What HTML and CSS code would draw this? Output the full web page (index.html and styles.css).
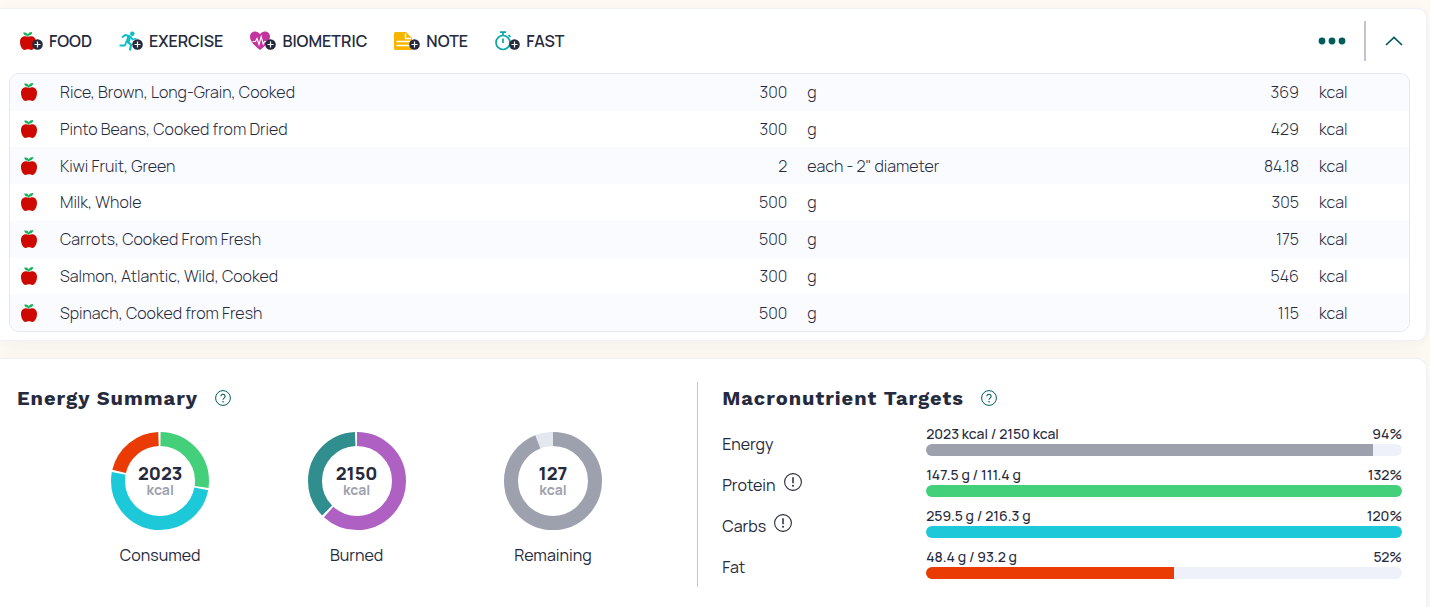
FILE: index.html
```html
<!DOCTYPE html>
<html lang="en">
<head>
    <meta charset="UTF-8">
    <meta name="viewport" content="width=device-width, initial-scale=1.0">
    <title>Food Diary</title>
    <link rel="stylesheet" href="styles.css">
</head>
<body>
    <svg width="0" height="0" class="sprites" aria-hidden="true">
        <symbol id="apple" viewBox="0 0 18 20">
            <path fill="#ce0a00" d="M9 6C6.500 4.600 1.200 4.700 1 10.800c-.1 3.800 2 8.100 4.600 8.200 1.400 0 2-.7 3.400-.7s2 .7 3.400.7c2.600-.1 4.700-4.400 4.600-8.200C16.800 4.700 11.500 4.600 9 6z"/>
            <path fill="#19b25b" d="M8.200 5.800C8 5 7.500 4.700 7 4.600 5.300 4.300 4.500 3.200 4.300 1.500c2.200-.2 3.700.4 4.500 1.900C9.400 1.600 11 .8 13.200.9c-.1 2-1.400 3.400-3.300 3.700-.4.100-.6.500-.6 1.200z"/>
        </symbol>
        <symbol id="plus" viewBox="0 0 11 11">
            <circle cx="5.5" cy="5.500" r="5.300" fill="#262a3d"/>
            <path d="M5.500 2.500v6M2.500 5.500h6" stroke="#fff" stroke-width="1.200"/>
        </symbol>
        <symbol id="help" viewBox="0 0 16 16">
            <circle cx="8" cy="8" r="7.400" fill="none" stroke="#005c5c" stroke-width="1"/>
            <path d="M5.900 6.300a2.100 2.100 0 1 1 3.200 1.800c-.8.500-1.100.8-1.100 1.600" fill="none" stroke="#005c5c" stroke-width="1.100"/>
            <circle cx="8" cy="11.700" r=".8" fill="#005c5c"/>
        </symbol>
        <symbol id="alert" viewBox="0 0 18 18">
            <circle cx="9" cy="9" r="8.400" fill="none" stroke="#262a3d" stroke-width="1.100"/>
            <path d="M9 4.300v6" stroke="#262a3d" stroke-width="1.500"/>
            <circle cx="9" cy="12.800" r="1" fill="#262a3d"/>
        </symbol>
    </svg>

    <section class="card diary">
        <div class="toolbar">
            <button class="add">
                <svg width="24" height="20" viewBox="0 0 24 20"><use href="#apple" width="18" height="20"/><use href="#plus" x="13" y="8" width="11" height="11"/></svg>
                FOOD
            </button>
            <button class="add">
                <svg width="24" height="20" viewBox="0 0 24 20">
                    <circle cx="13.300" cy="2.800" r="2.300" fill="#0bbfc9"/>
                    <path d="M3 6.500 6 4l5 1.200M7.500 10 6 14.500H.5M11.500 5.500l2 3 4-1" fill="none" stroke="#0bbfc9" stroke-width="1.800" stroke-linejoin="round"/>
                    <path d="M8 10.500l4 3-1 6" fill="none" stroke="#0bbfc9" stroke-width="2.200"/>
                    <path d="M8.500 4.500 12.300 5.500 10.500 11.500 6.800 10.500z" fill="#0bbfc9"/>
                    <use href="#plus" x="13" y="8" width="11" height="11"/>
                </svg>
                EXERCISE
            </button>
            <button class="add">
                <svg width="26" height="20" viewBox="0 0 26 20">
                    <path fill="#c2359f" d="M10 19C7 16.500 0 11.500 0 5.800 0 2.600 2.200.5 5 .5c2 0 3.800 1 5 2.800C11.200 1.500 13 .5 15 .5c2.800 0 5 2.100 5 5.300C20 11.500 13 16.500 10 19z"/>
                    <path d="M2.500 10.500h3l1.500-3 2 6 2.200-8 2 7.500 1.500-2.500h2" fill="none" stroke="#fff" stroke-width="1.100"/>
                    <use href="#plus" x="15" y="8" width="11" height="11"/>
                </svg>
                BIOMETRIC
            </button>
            <button class="add">
                <svg width="26" height="20" viewBox="0 0 26 20">
                    <path fill="#f7b500" d="M1.500 1H12l6 6v12H1.500A1.500 1.500 0 0 1 0 17.500v-15A1.500 1.500 0 0 1 1.500 1z"/>
                    <path d="M11.500 2.500V7.500H17M2.500 10.500h14M2.500 14.500h14" fill="none" stroke="#fff" stroke-width="1.400"/>
                    <use href="#plus" x="15" y="8" width="11" height="11"/>
                </svg>
                NOTE
            </button>
            <button class="add">
                <svg width="25" height="20" viewBox="0 0 25 20">
                    <circle cx="8" cy="11.500" r="7" fill="none" stroke="#0ba5a5" stroke-width="1.700"/>
                    <path d="M5 1.200h6M8 1.500v3M8 7.500v4.500M13.500 4l2 2" fill="none" stroke="#0ba5a5" stroke-width="1.700"/>
                    <use href="#plus" x="14" y="8" width="11" height="11"/>
                </svg>
                FAST
            </button>
            <button class="more" aria-label="More options">
                <svg width="28" height="8" viewBox="0 0 28 8" fill="#005c5c"><circle cx="4" cy="4" r="3.400"/><circle cx="14" cy="4" r="3.400"/><circle cx="24" cy="4" r="3.400"/></svg>
            </button>
            <button class="collapse" aria-label="Collapse">
                <svg width="18" height="10" viewBox="0 0 18 10"><path d="M1 9l8-7.500L17 9" fill="none" stroke="#005c5c" stroke-width="1.700"/></svg>
            </button>
        </div>

        <div class="foods">
            <table>
                <colgroup>
                    <col class="col-icon"><col><col class="col-amount"><col class="col-unit"><col class="col-energy"><col class="col-kcal">
                </colgroup>
                <tbody>
                    <tr><td><svg width="18" height="20"><use href="#apple"/></svg></td><td>Rice, Brown, Long-Grain, Cooked</td><td class="num">300</td><td class="unit">g</td><td class="num">369</td><td class="unit">kcal</td></tr>
                    <tr><td><svg width="18" height="20"><use href="#apple"/></svg></td><td>Pinto Beans, Cooked from Dried</td><td class="num">300</td><td class="unit">g</td><td class="num">429</td><td class="unit">kcal</td></tr>
                    <tr><td><svg width="18" height="20"><use href="#apple"/></svg></td><td>Kiwi Fruit, Green</td><td class="num">2</td><td class="unit">each - 2" diameter</td><td class="num">84.18</td><td class="unit">kcal</td></tr>
                    <tr><td><svg width="18" height="20"><use href="#apple"/></svg></td><td>Milk, Whole</td><td class="num">500</td><td class="unit">g</td><td class="num">305</td><td class="unit">kcal</td></tr>
                    <tr><td><svg width="18" height="20"><use href="#apple"/></svg></td><td>Carrots, Cooked From Fresh</td><td class="num">500</td><td class="unit">g</td><td class="num">175</td><td class="unit">kcal</td></tr>
                    <tr><td><svg width="18" height="20"><use href="#apple"/></svg></td><td>Salmon, Atlantic, Wild, Cooked</td><td class="num">300</td><td class="unit">g</td><td class="num">546</td><td class="unit">kcal</td></tr>
                    <tr><td><svg width="18" height="20"><use href="#apple"/></svg></td><td>Spinach, Cooked from Fresh</td><td class="num">500</td><td class="unit">g</td><td class="num">115</td><td class="unit">kcal</td></tr>
                </tbody>
            </table>
        </div>
    </section>

    <section class="card summary">
        <div class="energy">
            <div class="heading">
                <h2>Energy Summary</h2>
                <button class="help" aria-label="About energy summary"><svg width="16" height="16"><use href="#help"/></svg></button>
            </div>
            <div class="rings">
                <figure>
                    <div class="ring">
                        <svg viewBox="0 0 98 98">
                            <circle class="arc green" cx="49" cy="49" r="42" pathLength="1000" stroke-dasharray="271 729" stroke-dashoffset="-2"/>
                            <circle class="arc cyan" cx="49" cy="49" r="42" pathLength="1000" stroke-dasharray="499 501" stroke-dashoffset="-280"/>
                            <circle class="arc red" cx="49" cy="49" r="42" pathLength="1000" stroke-dasharray="207 793" stroke-dashoffset="-787"/>
                        </svg>
                        <div class="total"><b>2023</b><span>kcal</span></div>
                    </div>
                    <figcaption>Consumed</figcaption>
                </figure>
                <figure>
                    <div class="ring">
                        <svg viewBox="0 0 98 98">
                            <circle class="arc purple" cx="49" cy="49" r="42" pathLength="1000" stroke-dasharray="618 382"/>
                            <circle class="arc teal" cx="49" cy="49" r="42" pathLength="1000" stroke-dasharray="367 633" stroke-dashoffset="-626"/>
                        </svg>
                        <div class="total"><b>2150</b><span>kcal</span></div>
                    </div>
                    <figcaption>Burned</figcaption>
                </figure>
                <figure>
                    <div class="ring">
                        <svg viewBox="0 0 98 98">
                            <circle class="arc pale" cx="49" cy="49" r="42"/>
                            <circle class="arc gray" cx="49" cy="49" r="42" pathLength="1000" stroke-dasharray="941 59"/>
                        </svg>
                        <div class="total"><b>127</b><span>kcal</span></div>
                    </div>
                    <figcaption>Remaining</figcaption>
                </figure>
            </div>
        </div>

        <div class="macros">
            <div class="heading">
                <h2>Macronutrient Targets</h2>
                <button class="help" aria-label="About macronutrient targets"><svg width="16" height="16"><use href="#help"/></svg></button>
            </div>
            <div class="targets">
                <div class="target">
                    <div class="name">Energy</div>
                    <div class="progress">
                        <div class="values"><span>2023 kcal / 2150 kcal</span><span>94%</span></div>
                        <div class="track"><div class="fill bg-gray" style="width: 94%"></div></div>
                    </div>
                </div>
                <div class="target">
                    <div class="name">Protein <svg width="18" height="18"><use href="#alert"/></svg></div>
                    <div class="progress">
                        <div class="values"><span>147.5 g / 111.4 g</span><span>132%</span></div>
                        <div class="track"><div class="fill bg-green" style="width: 100%"></div></div>
                    </div>
                </div>
                <div class="target">
                    <div class="name">Carbs <svg width="18" height="18"><use href="#alert"/></svg></div>
                    <div class="progress">
                        <div class="values"><span>259.5 g / 216.3 g</span><span>120%</span></div>
                        <div class="track"><div class="fill bg-cyan" style="width: 100%"></div></div>
                    </div>
                </div>
                <div class="target">
                    <div class="name">Fat</div>
                    <div class="progress">
                        <div class="values"><span>48.4 g / 93.2 g</span><span>52%</span></div>
                        <div class="track"><div class="fill bg-red" style="width: 52%"></div></div>
                    </div>
                </div>
            </div>
        </div>
    </section>
</body>
</html>
```
FILE: styles.css
```css
* {
    box-sizing: border-box;
}

body {
    display: flex;
    flex-direction: column;
    gap: 17px;
    min-height: 100vh;
    margin: 0;
    padding: 8px 3px 0 0;
    background-color: #fffbf4;
    color: #262a3d;
    font-family: Manrope, Inter, sans-serif;
    font-size: 16px;
}

.sprites {
    position: absolute;
}

button {
    padding: 0;
    border: 0;
    background: none;
    color: inherit;
    font: inherit;
    cursor: pointer;
}

svg {
    display: block;
    flex: none;
}

.card {
    border: 1px solid #eef0fa;
    border-left: 0;
    border-radius: 0 10px 10px 0;
    background-color: #fff;
    box-shadow: 0 5px 20px rgba(38, 42, 61, 0.06);
}

/* Diary */
.diary {
    padding: 0 16px 8px 9px;
}

.toolbar {
    display: flex;
    align-items: center;
    gap: 27px;
    height: 64px;
    padding-left: 10px;
}

.add {
    display: flex;
    align-items: center;
    gap: 6px;
    font-weight: 600;
}

.more {
    margin-left: auto;
}

.collapse {
    display: flex;
    align-items: center;
    height: 40px;
    margin-left: -9px;
    padding: 0 7px 0 19px;
    border-left: 2px solid #c1c4d0;
}

.foods {
    overflow: hidden;
    border: 1px solid #e4e6f0;
    border-radius: 10px;
}

table {
    width: 100%;
    height: 257px;
    border-collapse: collapse;
    table-layout: fixed;
    font-size: 16px;
    font-weight: 300;
}

tr:nth-child(odd) {
    background-color: #fafbff;
}

td {
    padding: 0;
}

td svg {
    margin-left: 10px;
}

.col-icon {
    width: 50px;
}

.col-amount {
    width: 100px;
}

.col-unit {
    width: 30%;
}

.col-energy {
    width: 92px;
}

.col-kcal {
    width: 110px;
}

.num {
    text-align: right;
}

.unit {
    padding-left: 20px;
}

/* Summary */
.summary {
    display: flex;
    flex: 1;
    padding: 23px 24px 20px 0;
    border-bottom: 0;
    border-radius: 0 10px 0 0;
}

.heading {
    display: flex;
    align-items: center;
    gap: 17px;
    height: 32px;
}

h2 {
    margin: 0;
    font-family: "Work Sans", Inter, sans-serif;
    font-size: 20px;
    font-weight: 700;
    letter-spacing: 1px;
}

.energy {
    flex: none;
    width: 49.8%;
    padding-left: 17px;
    border-right: 1px solid #c1c4d0;
}

.rings {
    display: grid;
    grid-template-columns: repeat(3, 1fr);
    margin-top: 18px;
    padding: 0 46px 0 45px;
}

figure {
    display: flex;
    flex-direction: column;
    align-items: center;
    gap: 15px;
    margin: 0;
}

.ring {
    display: grid;
    place-items: center;
    width: 98px;
    height: 98px;
}

.ring > * {
    grid-area: 1 / 1;
}

.ring svg {
    width: 98px;
    height: 98px;
    transform: rotate(-90deg);
}

.arc {
    fill: none;
    stroke-width: 14;
}

.green { stroke: #44d07b; }
.cyan { stroke: #1dc9d8; }
.red { stroke: #ea3b04; }
.purple { stroke: #ae60c3; }
.teal { stroke: #318e8e; }
.gray { stroke: #9da1ae; }
.pale { stroke: #e4e7f0; }

.total {
    display: flex;
    flex-direction: column;
    align-items: center;
    font-size: 14px;
    font-weight: 700;
    line-height: 16px;
}

.total b {
    font-size: 18px;
    line-height: 18px;
}

.total span {
    color: #9da1ae;
}

figcaption {
    line-height: 20px;
}

.macros {
    flex: 1;
    padding-left: 24px;
}

.targets {
    display: flex;
    flex-direction: column;
    gap: 11px;
    margin-top: 12px;
}

.target {
    display: flex;
}

.name {
    display: flex;
    flex: none;
    gap: 8px;
    width: 204px;
    padding-top: 8px;
    line-height: 20px;
}

.name svg {
    margin-top: -2px;
}

.progress {
    flex: 1;
}

.values {
    display: flex;
    justify-content: space-between;
    margin-bottom: 2px;
    font-size: 14px;
    font-weight: 500;
    line-height: 16px;
}

.track {
    overflow: hidden;
    height: 12px;
    border-radius: 6px;
    background-color: #eff1fa;
}

.fill {
    height: 100%;
}

.bg-gray { background-color: #9da1ae; }
.bg-green { background-color: #44d07b; }
.bg-cyan { background-color: #1dc9d8; }
.bg-red { background-color: #ea3b04; }
```
